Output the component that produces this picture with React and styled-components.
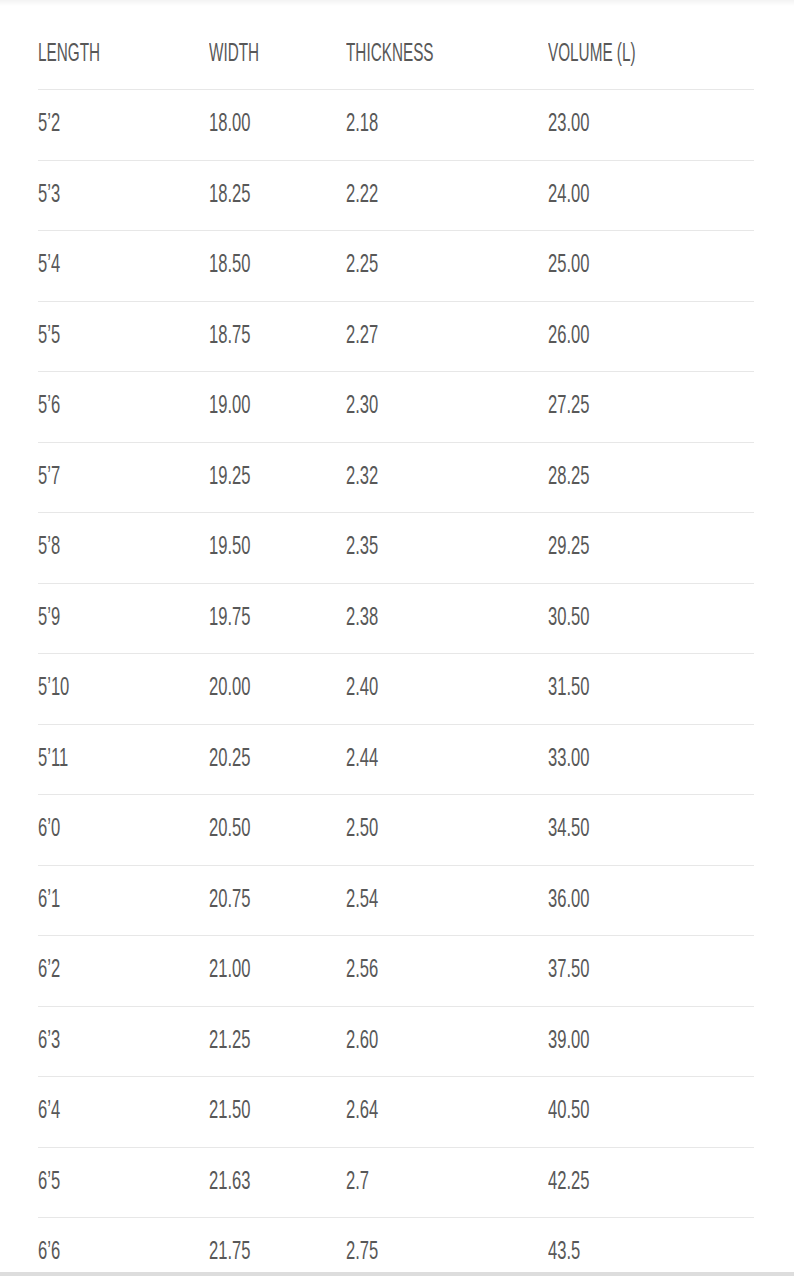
import React from "react";
import styled, { createGlobalStyle } from "styled-components";

const GlobalStyle = createGlobalStyle`
  html, body { margin: 0; padding: 0; background: #ffffff; }
  body { font-family: "Liberation Sans", Arial, sans-serif; }
`;

const Page = styled.div`
  position: relative;
  width: 794px;
  height: 1276px;
  background: #ffffff;
  overflow: hidden;
  display: flex;
  flex-direction: column;
`;

const TopShade = styled.div`
  position: absolute;
  top: 0;
  left: 0;
  right: 0;
  height: 6px;
  background: linear-gradient(#f3f3f3, rgba(255, 255, 255, 0));
`;

const Table = styled.div`
  display: flex;
  flex-direction: column;
  padding: 0 40px 0 38px;
  flex: 1 1 0;
  min-height: 0;
  overflow: hidden;
`;

const Row = styled.div`
  display: grid;
  grid-template-columns: 171px 137px 202px 1fr;
  box-sizing: border-box;
  flex: none;
  height: ${(p) => (p.$head ? "89px" : "70.5px")};
  padding-top: ${(p) => (p.$head ? "37px" : "17px")};
  border-top: ${(p) => (p.$head ? "none" : "1px solid #e7e7e7")};
`;

const Cell = styled.span`
  display: inline-block;
  font-family: "Liberation Sans", Arial, sans-serif;
  font-size: 25.5px;
  line-height: 30px;
  color: #585858;
  white-space: nowrap;
  transform: scaleX(${(p) => (p.$head ? 0.6 : 0.65)});
  transform-origin: left center;
`;

const BottomBar = styled.div`
  flex: none;
  height: 4px;
  background: #dddddd;
`;

const headers = ["LENGTH", "WIDTH", "THICKNESS", "VOLUME (L)"];

const rows = [
  ["5\u20192", "18.00", "2.18", "23.00"],
  ["5\u20193", "18.25", "2.22", "24.00"],
  ["5\u20194", "18.50", "2.25", "25.00"],
  ["5\u20195", "18.75", "2.27", "26.00"],
  ["5\u20196", "19.00", "2.30", "27.25"],
  ["5\u20197", "19.25", "2.32", "28.25"],
  ["5\u20198", "19.50", "2.35", "29.25"],
  ["5\u20199", "19.75", "2.38", "30.50"],
  ["5\u201910", "20.00", "2.40", "31.50"],
  ["5\u201911", "20.25", "2.44", "33.00"],
  ["6\u20190", "20.50", "2.50", "34.50"],
  ["6\u20191", "20.75", "2.54", "36.00"],
  ["6\u20192", "21.00", "2.56", "37.50"],
  ["6\u20193", "21.25", "2.60", "39.00"],
  ["6\u20194", "21.50", "2.64", "40.50"],
  ["6\u20195", "21.63", "2.7", "42.25"],
  ["6\u20196", "21.75", "2.75", "43.5"],
];

export default function App() {
  return (
    <>
      <GlobalStyle />
      <Page>
        <TopShade />
        <Table>
          <Row $head>
            {headers.map((h) => (
              <div key={h}>
                <Cell $head>{h}</Cell>
              </div>
            ))}
          </Row>
          {rows.map((r) => (
            <Row key={r[0]}>
              {r.map((c, i) => (
                <div key={i}>
                  <Cell>{c}</Cell>
                </div>
              ))}
            </Row>
          ))}
        </Table>
        <BottomBar />
      </Page>
    </>
  );
}
